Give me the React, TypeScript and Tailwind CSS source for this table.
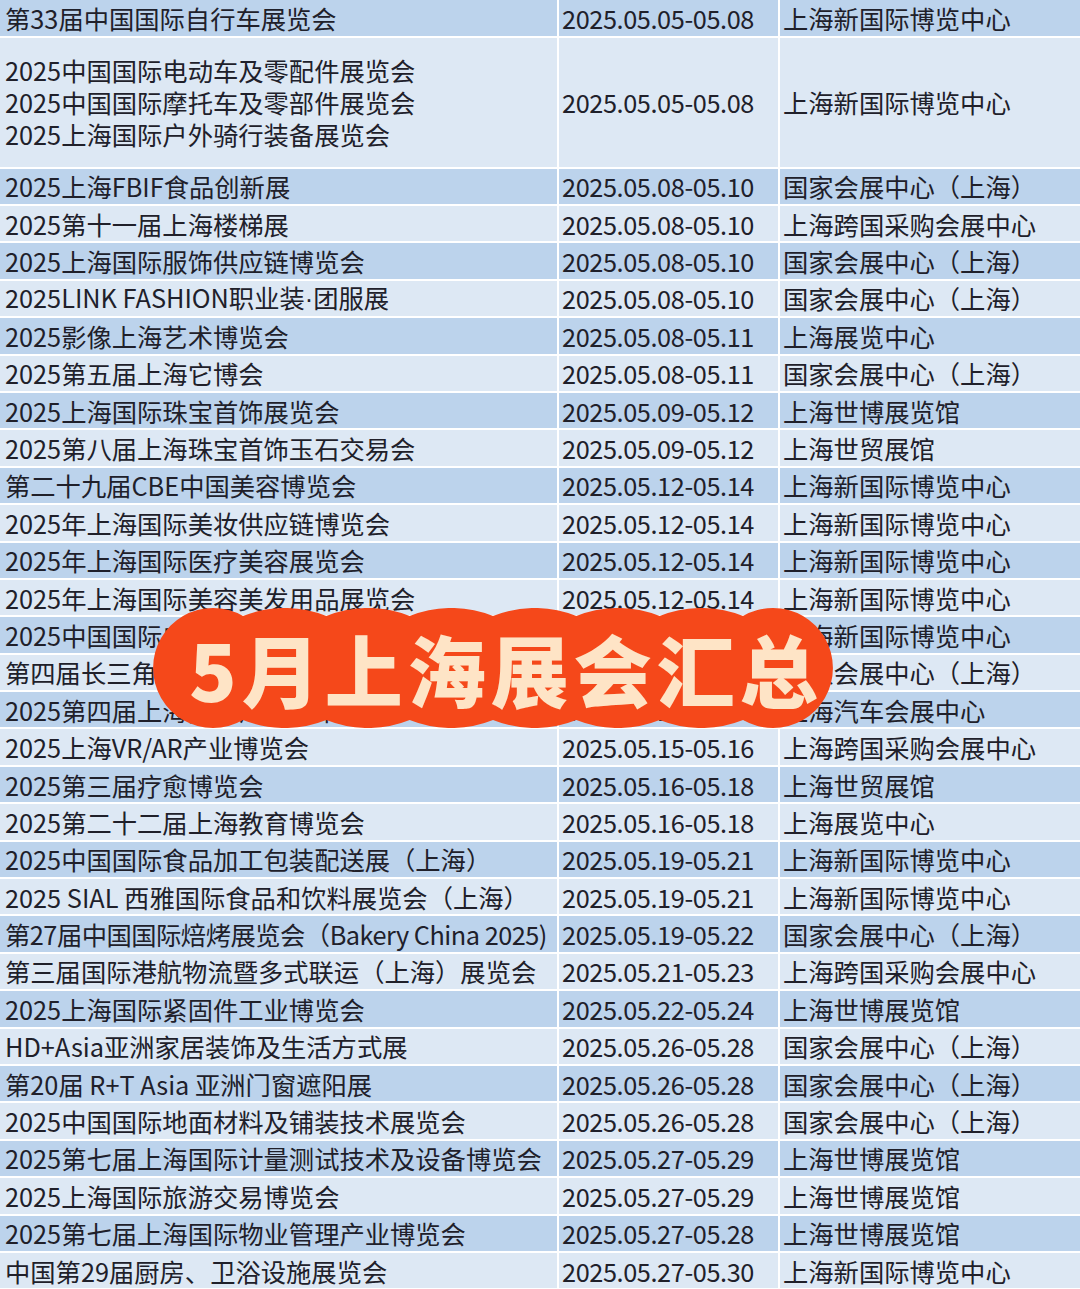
import React from 'react';

type Row = { name: string[]; date: string; venue: string; tight?: boolean };

const rows: Row[] = [
  { name: ['第33届中国国际自行车展览会'], date: '2025.05.05-05.08', venue: '上海新国际博览中心' },
  {
    name: ['2025中国国际电动车及零配件展览会', '2025中国国际摩托车及零部件展览会', '2025上海国际户外骑行装备展览会'],
    date: '2025.05.05-05.08',
    venue: '上海新国际博览中心',
  },
  { name: ['2025上海FBIF食品创新展'], date: '2025.05.08-05.10', venue: '国家会展中心（上海）' },
  { name: ['2025第十一届上海楼梯展'], date: '2025.05.08-05.10', venue: '上海跨国采购会展中心' },
  { name: ['2025上海国际服饰供应链博览会'], date: '2025.05.08-05.10', venue: '国家会展中心（上海）' },
  { name: ['2025LINK FASHION职业装·团服展'], date: '2025.05.08-05.10', venue: '国家会展中心（上海）' },
  { name: ['2025影像上海艺术博览会'], date: '2025.05.08-05.11', venue: '上海展览中心' },
  { name: ['2025第五届上海它博会'], date: '2025.05.08-05.11', venue: '国家会展中心（上海）' },
  { name: ['2025上海国际珠宝首饰展览会'], date: '2025.05.09-05.12', venue: '上海世博展览馆' },
  { name: ['2025第八届上海珠宝首饰玉石交易会'], date: '2025.05.09-05.12', venue: '上海世贸展馆' },
  { name: ['第二十九届CBE中国美容博览会'], date: '2025.05.12-05.14', venue: '上海新国际博览中心' },
  { name: ['2025年上海国际美妆供应链博览会'], date: '2025.05.12-05.14', venue: '上海新国际博览中心' },
  { name: ['2025年上海国际医疗美容展览会'], date: '2025.05.12-05.14', venue: '上海新国际博览中心' },
  { name: ['2025年上海国际美容美发用品展览会'], date: '2025.05.12-05.14', venue: '上海新国际博览中心' },
  { name: ['2025中国国际电子元器件博览会'], date: '2025.05.13-05.15', venue: '上海新国际博览中心' },
  { name: ['第四届长三角国际文化产业博览会'], date: '2025.05.13-05.15', venue: '国家会展中心（上海）' },
  { name: ['2025第四届上海国际汽车后市场展'], date: '2025.05.14-05.16', venue: '上海汽车会展中心' },
  { name: ['2025上海VR/AR产业博览会'], date: '2025.05.15-05.16', venue: '上海跨国采购会展中心' },
  { name: ['2025第三届疗愈博览会'], date: '2025.05.16-05.18', venue: '上海世贸展馆' },
  { name: ['2025第二十二届上海教育博览会'], date: '2025.05.16-05.18', venue: '上海展览中心' },
  { name: ['2025中国国际食品加工包装配送展（上海）'], date: '2025.05.19-05.21', venue: '上海新国际博览中心' },
  { name: ['2025 SIAL 西雅国际食品和饮料展览会（上海）'], date: '2025.05.19-05.21', venue: '上海新国际博览中心' },
  {
    name: ['第27届中国国际焙烤展览会（Bakery China 2025)'],
    date: '2025.05.19-05.22',
    venue: '国家会展中心（上海）',
    tight: true,
  },
  { name: ['第三届国际港航物流暨多式联运（上海）展览会'], date: '2025.05.21-05.23', venue: '上海跨国采购会展中心' },
  { name: ['2025上海国际紧固件工业博览会'], date: '2025.05.22-05.24', venue: '上海世博展览馆' },
  { name: ['HD+Asia亚洲家居装饰及生活方式展'], date: '2025.05.26-05.28', venue: '国家会展中心（上海）' },
  { name: ['第20届 R+T Asia 亚洲门窗遮阳展'], date: '2025.05.26-05.28', venue: '国家会展中心（上海）' },
  { name: ['2025中国国际地面材料及铺装技术展览会'], date: '2025.05.26-05.28', venue: '国家会展中心（上海）' },
  { name: ['2025第七届上海国际计量测试技术及设备博览会'], date: '2025.05.27-05.29', venue: '上海世博展览馆' },
  { name: ['2025上海国际旅游交易博览会'], date: '2025.05.27-05.29', venue: '上海世博展览馆' },
  { name: ['2025第七届上海国际物业管理产业博览会'], date: '2025.05.27-05.28', venue: '上海世博展览馆' },
  { name: ['中国第29届厨房、卫浴设施展览会'], date: '2025.05.27-05.30', venue: '上海新国际博览中心' },
];

// scalloped badge outline, 680 x 120
const valleys = [90, 173.33, 256.67, 340, 423.33, 506.67, 590];
function badgePath() {
  let d = `M 90 8 A 60 60 0 1 0 90 112`;
  for (let i = 1; i < valleys.length; i++) d += ` A 112 112 0 0 0 ${valleys[i]} 112`;
  d += ` A 60 60 0 1 0 590 8`;
  for (let i = valleys.length - 2; i >= 0; i--) d += ` A 112 112 0 0 0 ${valleys[i]} 8`;
  return d + ' Z';
}

// the half-width middle dot would render full-width in the CJK font
function Name({ text }: { text: string }) {
  const parts = text.split('·');
  if (parts.length === 1) return <span>{text}</span>;
  return (
    <span>
      {parts[0]}
      <span className="font-['Liberation_Sans']">·</span>
      {parts[1]}
    </span>
  );
}

function Cell({ children, className = '' }: { children: React.ReactNode; className?: string }) {
  return <div className={`flex flex-col justify-center overflow-hidden whitespace-nowrap ${className}`}>{children}</div>;
}

export default function App() {
  return (
    <div
      className="relative w-[1080px] h-[1289px] overflow-hidden bg-white text-[25.3px] leading-[32px] text-[#20202a]"
      style={{ fontFamily: '"Noto Sans CJK SC", "Noto Sans", sans-serif' }}
    >
      <div className="flex flex-col gap-[2px]">
        {rows.map((r, i) => {
          const bg = i % 2 === 0 ? 'bg-[#bcd3ec]' : 'bg-[#dde8f4]';
          const h = i === 0 ? 'h-[36px]' : i === 1 ? 'h-[128.6px]' : 'h-[35.4px]';
          return (
            <div key={i} className={`grid grid-cols-[557px_219px_1fr] gap-x-[2px] ${h}`}>
              <Cell className={`${bg} pl-[5px] ${r.tight ? 'tracking-[-0.5px]' : ''}`}>
                {r.name.map((n) => (
                  <Name key={n} text={n} />
                ))}
              </Cell>
              <Cell className={`${bg} pl-[3px] tracking-[-0.4px]`}>{r.date}</Cell>
              <Cell className={`${bg} pl-[3px]`}>{r.venue}</Cell>
            </div>
          );
        })}
      </div>

      {/* title badge */}
      <div className="absolute left-[153px] top-[608px] w-[680px] h-[120px]">
        <svg width="680" height="120" viewBox="0 0 680 120" className="absolute inset-0">
          <path d={badgePath()} fill="#f5481a" />
        </svg>
        <div className="relative flex h-full items-center justify-center pl-[26px] text-[78px] font-black leading-none tracking-[5px] text-[#fee4c6]">
          5月上海展会汇总
        </div>
      </div>
    </div>
  );
}
